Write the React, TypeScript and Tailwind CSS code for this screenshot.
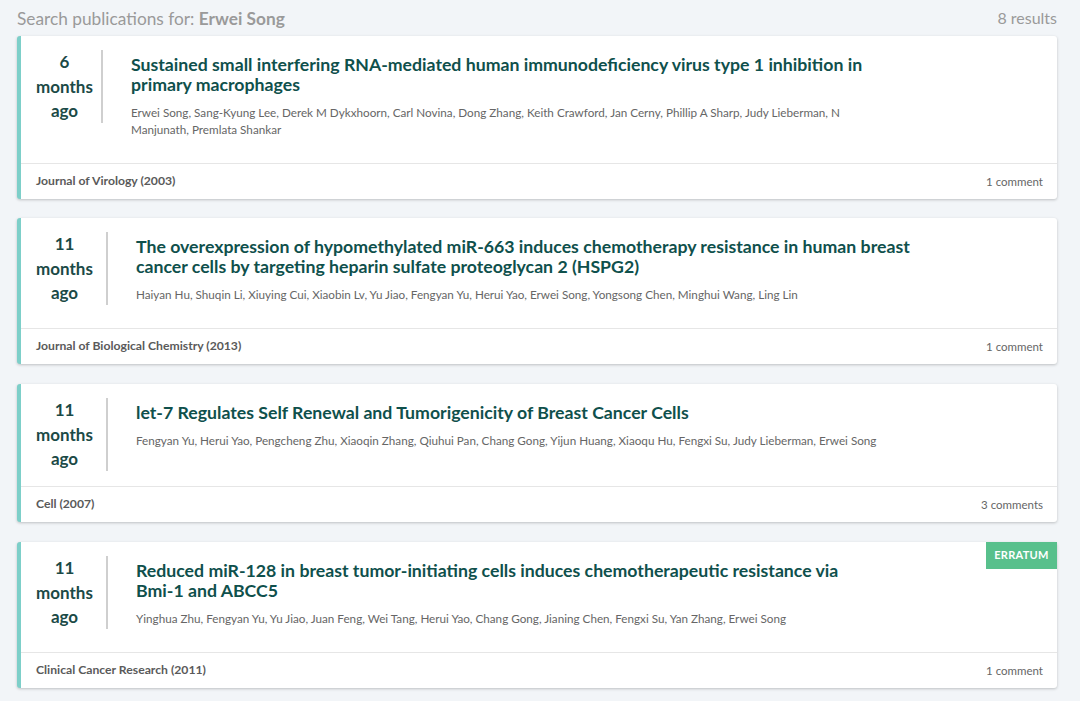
import React from "react";

type Pub = {
  num: string;
  title: string;
  authors: string;
  journal: string;
  comments: string;
  bodyH: string;
  datePr: string;
  titleW: string;
  erratum?: boolean;
};

const pubs: Pub[] = [
  {
    num: "6",
    title:
      "Sustained small interfering RNA-mediated human immunodeficiency virus type 1 inhibition in primary macrophages",
    authors:
      "Erwei Song, Sang-Kyung Lee, Derek M Dykxhoorn, Carl Novina, Dong Zhang, Keith Crawford, Jan Cerny, Phillip A Sharp, Judy Lieberman, N Manjunath, Premlata Shankar",
    journal: "Journal of Virology (2003)",
    comments: "1 comment",
    bodyH: "h-[127px]",
    datePr: "pr-[7px]",
    titleW: "max-w-[785px]",
  },
  {
    num: "11",
    title:
      "The overexpression of hypomethylated miR-663 induces chemotherapy resistance in human breast cancer cells by targeting heparin sulfate proteoglycan 2 (HSPG2)",
    authors:
      "Haiyan Hu, Shuqin Li, Xiuying Cui, Xiaobin Lv, Yu Jiao, Fengyan Yu, Herui Yao, Erwei Song, Yongsong Chen, Minghui Wang, Ling Lin",
    journal: "Journal of Biological Chemistry (2013)",
    comments: "1 comment",
    bodyH: "h-[110px]",
    datePr: "pr-[12px]",
    titleW: "max-w-[785px]",
  },
  {
    num: "11",
    title: "let-7 Regulates Self Renewal and Tumorigenicity of Breast Cancer Cells",
    authors:
      "Fengyan Yu, Herui Yao, Pengcheng Zhu, Xiaoqin Zhang, Qiuhui Pan, Chang Gong, Yijun Huang, Xiaoqu Hu, Fengxi Su, Judy Lieberman, Erwei Song",
    journal: "Cell (2007)",
    comments: "3 comments",
    bodyH: "h-[102px]",
    datePr: "pr-[12px]",
    titleW: "max-w-[785px]",
  },
  {
    num: "11",
    title:
      "Reduced miR-128 in breast tumor-initiating cells induces chemotherapeutic resistance via Bmi-1 and ABCC5",
    authors:
      "Yinghua Zhu, Fengyan Yu, Yu Jiao, Juan Feng, Wei Tang, Herui Yao, Chang Gong, Jianing Chen, Fengxi Su, Yan Zhang, Erwei Song",
    journal: "Clinical Cancer Research (2011)",
    comments: "1 comment",
    bodyH: "h-[110px]",
    datePr: "pr-[12px]",
    titleW: "max-w-[735px]",
    erratum: true,
  },
];

function Card({ p }: { p: Pub }) {
  return (
    <div className="relative bg-white border-l-4 border-[#7dcfc9] rounded-[3px] shadow-[0_1px_3px_rgba(0,0,0,0.22)]">
      {p.erratum && (
        <div className="absolute right-0 top-0 h-[27px] w-[71px] bg-[#58c08c] text-white text-[11px] font-bold tracking-[0.3px] flex items-center justify-center">
          ERRATUM
        </div>
      )}
      <div className={`${p.bodyH} flex items-start pt-[14px]`}>
        <div className={`pl-[14px] ${p.datePr}`}>
          <div className="w-[59px] text-center text-[17px] leading-[24.5px] font-bold text-[#1b4a47]">
            <div>{p.num}</div>
            <div>months</div>
            <div>ago</div>
          </div>
        </div>
        <div className="w-[2px] self-stretch max-h-[73px] bg-[#cfcfcf]" />
        <div className="pl-[28px] pr-[100px] flex-1 pt-[5px]">
          <div className={`${p.titleW} text-[17.7px] leading-[20px] font-bold text-[#0f504c]`}>
            {p.title}
          </div>
          <div className="max-w-[745px] mt-[9px] text-[11.7px] leading-[17px] text-[#666666]">
            {p.authors}
          </div>
        </div>
      </div>
      <div className="border-t border-[#e6e6e6] h-[36px] flex items-center justify-between pl-[15px] pr-[14px]">
        <span className="font-bold text-[12.2px] text-[#5a5a5a]">{p.journal}</span>
        <span className="text-[11.5px] text-[#666666]">{p.comments}</span>
      </div>
    </div>
  );
}

export default function App() {
  return (
    <div
      className="min-h-[701px] bg-[#f2f5f8] px-[17px] pr-[23px]"
      style={{ fontFamily: "Lato, 'Open Sans', sans-serif" }}
    >
      <div className="h-[36px] flex items-start justify-between pt-[6px]">
        <div className="text-[17.3px] text-[#9a9a9a]">
          Search publications for: <span className="font-bold">Erwei Song</span>
        </div>
        <div className="text-[16px] text-[#9a9a9a]">8 results</div>
      </div>
      <div className="flex flex-col gap-[19px]">
        {pubs.map((p, i) => (
          <div key={i} className={i >= 2 ? "mt-[1px]" : ""}>
            <Card p={p} />
          </div>
        ))}
      </div>
    </div>
  );
}
